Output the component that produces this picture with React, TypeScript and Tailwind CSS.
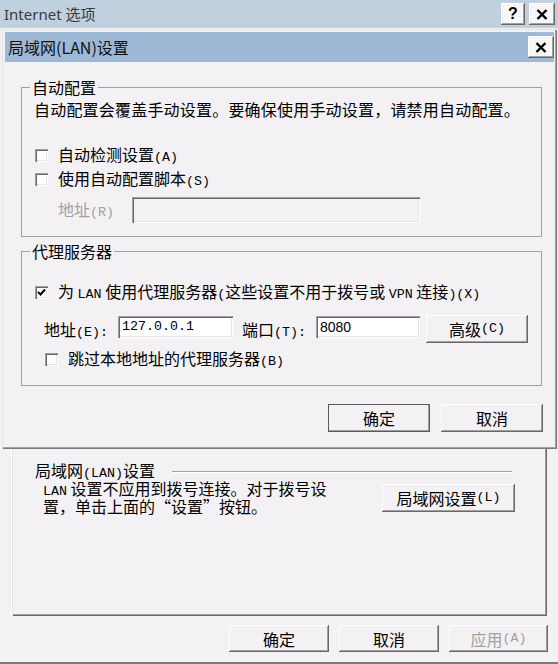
import type { ReactNode } from 'react';

const raised =
  'shadow-[inset_-1px_-1px_#696969,inset_1px_1px_#ffffff,inset_-2px_-2px_#a0a0a0,inset_2px_2px_#f4f1f4]';
const sunken =
  'shadow-[inset_1px_1px_#a0a0a0,inset_2px_2px_#696969,inset_-1px_-1px_#ffffff,inset_-2px_-2px_#e3e3e3]';

// half-width latin, like the bitmap font's 8px cells
function M({ children }: { children: ReactNode }) {
  return <span className="font-['Liberation_Mono',monospace] text-[13.33px]">{children}</span>;
}

function Btn({
  children,
  className = '',
  def,
  disabled,
}: {
  children: ReactNode;
  className?: string;
  def?: boolean;
  disabled?: boolean;
}) {
  return (
    <button
      className={`flex items-center justify-center bg-[#f4f1f4] leading-none ${raised} ${
        def ? 'outline outline-1 outline-[#5a5a5a] -outline-offset-1' : ''
      } ${disabled ? 'text-[#a0a0a0]' : 'text-black'} ${className}`}
    >
      {children}
    </button>
  );
}

function Check({ checked }: { checked?: boolean }) {
  return (
    <span className={`w-[13px] h-[13px] shrink-0 bg-white flex items-center justify-center ${sunken}`}>
      {checked && (
        <svg width="13" height="13" viewBox="0 0 13 13">
          <polyline points="3,6 5.5,8.5 10,3.5" fill="none" stroke="#000" strokeWidth="2" />
        </svg>
      )}
    </span>
  );
}

function CloseIcon() {
  return (
    <svg width="12" height="11" viewBox="0 0 12 11">
      <path d="M1.5 1 L10.5 10 M10.5 1 L1.5 10" stroke="#000" strokeWidth="2.4" />
    </svg>
  );
}

export default function App() {
  return (
    <div className="w-[558px] h-[664px] relative overflow-hidden bg-[#f4f1f4] font-['Noto_Sans_CJK_SC','Noto_Sans',sans-serif] text-[16px] text-black">
      {/* Internet 选项 window */}
      <div className="h-[28px] bg-[#bfd0de] flex items-center justify-between pl-[4px] pr-[3px]">
        <span className="font-['Noto_Sans','Noto_Sans_CJK_SC',sans-serif] text-[15px] text-[#3a3a3a]">
          Internet 选项
        </span>
        <div className="flex gap-[4px]">
          <button className={`w-[24px] h-[22px] bg-[#f7f7f7] flex items-center justify-center font-['Liberation_Sans',sans-serif] font-bold text-[16px] ${raised}`}>
            ?
          </button>
          <button className={`w-[26px] h-[22px] bg-[#f7f7f7] flex items-center justify-center ${raised}`}>
            <CloseIcon />
          </button>
        </div>
      </div>

      <div className="flex flex-col">
        <div className="mt-[12px] mx-[11px] h-[576px] pt-[422px] shadow-[inset_1px_1px_#ffffff,inset_2px_2px_#e6e3e6,inset_-1px_-1px_#696969,inset_-2px_-2px_#a0a0a0]">
          <div className="h-[19px] flex items-center">
            <span className="ml-[24px] leading-none">
              局域网<M>(LAN)</M>设置
            </span>
            <div className="flex-1 ml-[17px] mr-[35px] border-t border-b border-t-[#a0a0a0] border-b-white" />
          </div>
          <div className="flex items-start">
            <p className="ml-[32px] leading-[15px]">
              <M>LAN</M> 设置不应用到拨号连接。对于拨号设
              <br />
              置，单击上面的“设置”按钮。
            </p>
            <div className="flex-1" />
            <Btn className="mt-[3px] mr-[32px] w-[133px] h-[28px]">
              局域网设置<M>(L)</M>
            </Btn>
          </div>
        </div>
        <div className="mt-[9px] h-[27px] flex justify-end gap-[10px] pr-[10px]">
          <Btn className="w-[100px] h-[27px]">确定</Btn>
          <Btn className="w-[100px] h-[27px]">取消</Btn>
          <Btn className="w-[99px] h-[27px]" disabled>
            应用<M>(A)</M>
          </Btn>
        </div>
        <div className="mt-[10px] h-[2px] bg-[#7a7a7a]" />
      </div>

      {/* 局域网(LAN)设置 dialog, sits over the options window */}
      <div className="absolute left-[2px] top-[29px] w-[555px] h-[420px] p-[3px] bg-[#f4f1f4] shadow-[inset_1px_1px_#e6e3e6,inset_-1px_-1px_#7a7a7a,inset_-2px_-2px_#a0a0a0]">
        <div className="h-[30px] bg-[#9eb8d5] flex items-center justify-between pl-[3px]">
          <span className="text-[#111]">局域网(LAN)设置</span>
          <button className={`w-[26px] h-[22px] bg-[#f7f7f7] flex items-center justify-center ${raised}`}>
            <CloseIcon />
          </button>
        </div>

        <fieldset className="mt-[15px] ml-[16px] w-[521px] border border-[#a0a0a0] pl-[8px] pb-[13px]">
          <legend className="px-[2px] leading-[20px]">自动配置</legend>
          <p className="mt-[2px] ml-[4px] leading-[20px] tracking-[0.2px]">
            自动配置会覆盖手动设置。要确保使用手动设置，请禁用自动配置。
          </p>
          <div className="mt-[24px] h-[24px] flex items-center ml-[5px] gap-[10px]">
            <Check />
            <span>
              自动检测设置<M>(A)</M>
            </span>
          </div>
          <div className="h-[24px] flex items-center ml-[5px] gap-[10px]">
            <Check />
            <span>
              使用自动配置脚本<M>(S)</M>
            </span>
          </div>
          <div className="mt-[6px] h-[26px] flex items-center ml-[28px]">
            <span className="text-[#a0a0a0] w-[74px]">
              地址<M>(R)</M>
            </span>
            <div className={`w-[288px] h-[26px] ${sunken}`} />
          </div>
        </fieldset>

        <fieldset className="mt-[4px] ml-[16px] w-[521px] border border-[#a0a0a0] pl-[8px] pb-[14px]">
          <legend className="px-[2px] leading-[20px]">代理服务器</legend>
          <div className="mt-[19px] h-[24px] flex items-center ml-[5px] gap-[10px]">
            <Check checked />
            <span>
              为 <M>LAN</M> 使用代理服务器<M>(</M>这些设置不用于拨号或 <M>VPN</M> 连接<M>)(X)</M>
            </span>
          </div>
          <div className="mt-[11px] h-[28px] flex items-center ml-[14px]">
            <span className="w-[74px] pt-[2px]">
              地址<M>(E):</M>
            </span>
            <div className={`self-start mt-[1px] w-[115px] h-[22px] bg-white flex items-center pl-[4px] ${sunken}`}>
              <M>127.0.0.1</M>
            </div>
            <span className="ml-[9px] w-[74px] pt-[2px]">
              端口<M>(T):</M>
            </span>
            <div className={`self-start mt-[1px] w-[104px] h-[22px] bg-white flex items-center pl-[4px] font-['Liberation_Sans',sans-serif] text-[14px] ${sunken}`}>
              8080
            </div>
            <Btn className="ml-[6px] w-[102px] h-[28px]">
              高级<M>(C)</M>
            </Btn>
          </div>
          <div className="mt-[4px] h-[24px] flex items-center ml-[15px] gap-[10px]">
            <Check />
            <span>
              跳过本地地址的代理服务器<M>(B)</M>
            </span>
          </div>
        </fieldset>

        <div className="mt-[18px] flex justify-end gap-[11px] pr-[11px]">
          <Btn className="w-[102px] h-[28px]" def>
            确定
          </Btn>
          <Btn className="w-[102px] h-[28px]">取消</Btn>
        </div>
      </div>
    </div>
  );
}
